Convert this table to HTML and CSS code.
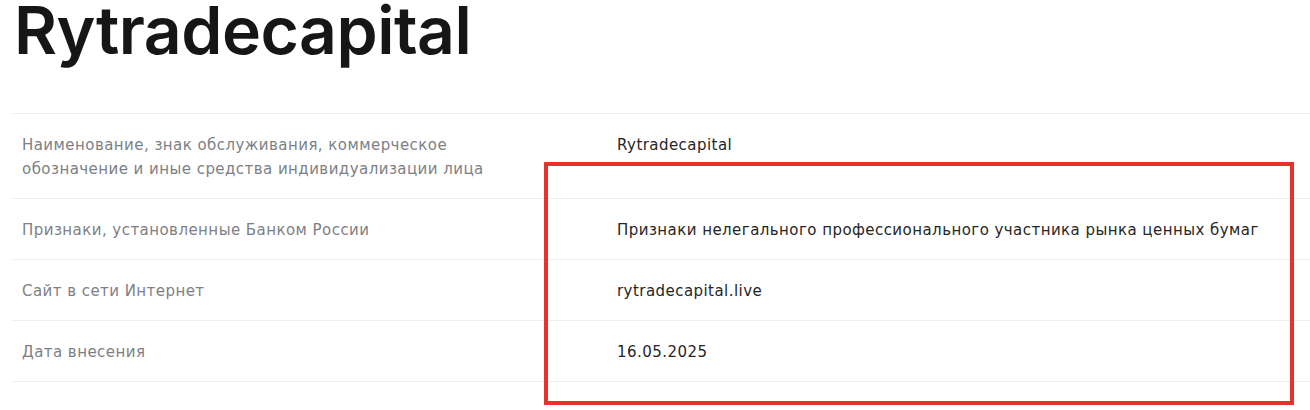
FILE: index.html
```html
<!DOCTYPE html>
<html lang="ru">
<head>
<meta charset="utf-8">
<title>Rytradecapital</title>
<link rel="stylesheet" href="styles.css">
</head>
<body>
<main class="page">
  <h1 class="title">Rytradecapital</h1>
  <div class="table">
    <div class="row">
      <div class="label">Наименование, знак обслуживания, коммерческое обозначение и иные средства индивидуализации лица</div>
      <div class="value">Rytradecapital</div>
    </div>
    <div class="row">
      <div class="label">Признаки, установленные Банком России</div>
      <div class="value">Признаки нелегального профессионального участника рынка ценных бумаг</div>
    </div>
    <div class="row">
      <div class="label">Сайт в сети Интернет</div>
      <div class="value">rytradecapital.live</div>
    </div>
    <div class="row">
      <div class="label">Дата внесения</div>
      <div class="value">16.05.2025</div>
    </div>
  </div>
  <div class="highlight"></div>
</main>
</body>
</html>
```

FILE: styles.css
```css
* { box-sizing: border-box; }
html, body { margin: 0; padding: 0; background: #fff; }
body {
  font-family: "DejaVu Sans", "Noto Sans", sans-serif;
  color: #222;
}
.page {
  position: relative;
  width: 1310px;
  height: 410px;
  overflow: hidden;
}
.title {
  margin: 0;
  padding: 0 0 0 14px;
  font-family: Inter, "Noto Sans", sans-serif;
  font-weight: 600;
  font-size: 66px;
  line-height: 60px;
  letter-spacing: -0.5px;
  color: #161616;
  height: 60px;
}
.table {
  margin: 53px 0 0 12px;
  border-top: 1px solid #efefef;
}
.row {
  display: grid;
  grid-template-columns: 595px 1fr;
  padding: 19px 0 17px 10px;
  border-bottom: 1px solid #efefef;
  font-size: 15px;
  letter-spacing: 0.45px;
  line-height: 24px;
}
.label {
  color: #7d8085;
  max-width: 490px;
}
.value {
  color: #262626;
}
.highlight {
  position: absolute;
  left: 544px;
  top: 162px;
  width: 750px;
  height: 243px;
  border: 4px solid #e8312a;
}
```
